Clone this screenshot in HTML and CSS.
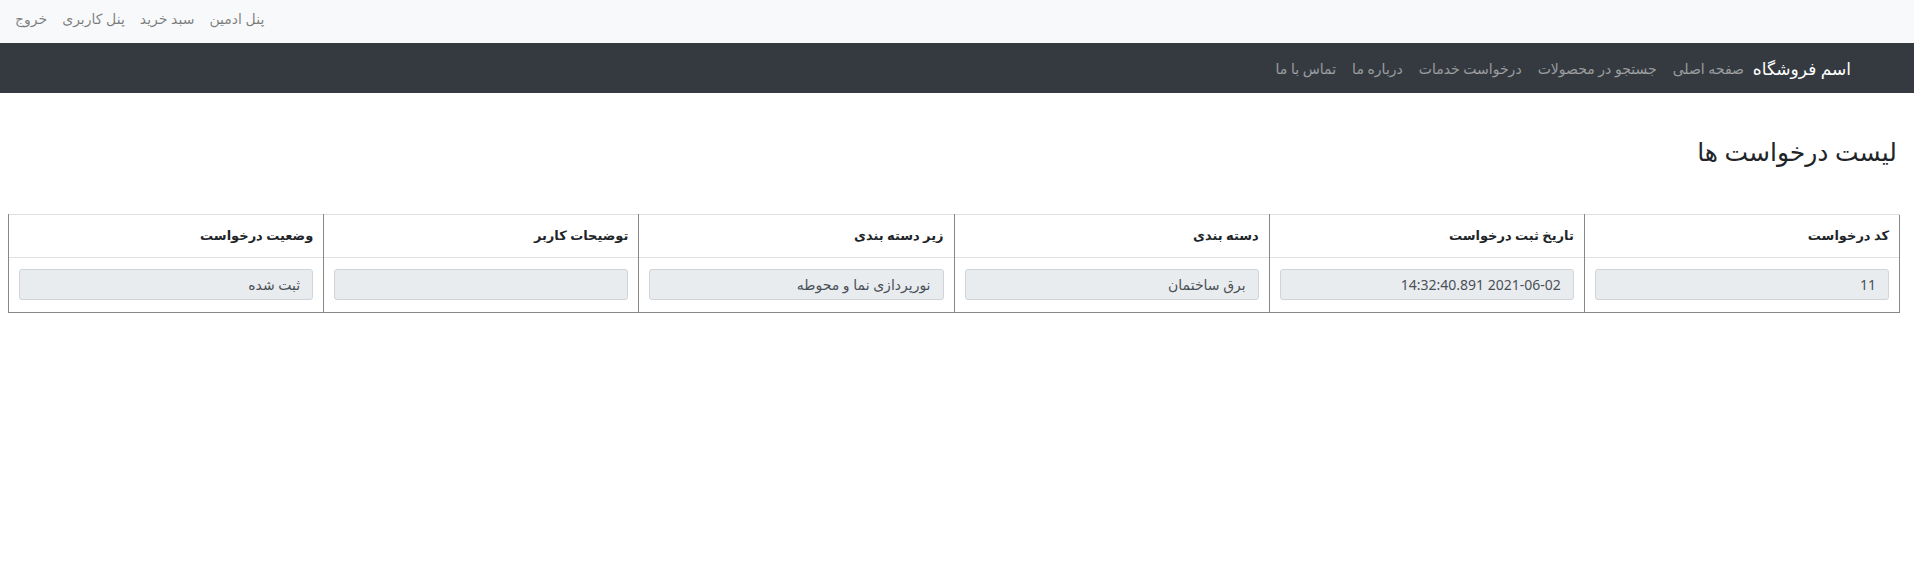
FILE: index.html
```html
<!DOCTYPE html>
<html lang="fa" dir="rtl">
<head>
<meta charset="utf-8">
<title>لیست درخواست ها</title>
<link rel="stylesheet" href="styles.css">
</head>
<body>
<div class="topbar">
  <a href="#" class="top-link">پنل ادمین</a>
  <a href="#" class="top-link">سبد خرید</a>
  <a href="#" class="top-link">پنل کاربری</a>
  <a href="#" class="top-link">خروج</a>
</div>
<nav class="navbar">
  <a href="#" class="brand">اسم فروشگاه</a>
  <a href="#" class="nav-link">صفحه اصلی</a>
  <a href="#" class="nav-link">جستجو در محصولات</a>
  <a href="#" class="nav-link">درخواست خدمات</a>
  <a href="#" class="nav-link">درباره ما</a>
  <a href="#" class="nav-link">تماس با ما</a>
</nav>
<main class="content">
  <h3 class="title">لیست درخواست ها</h3>
  <table class="req-table">
    <tr>
      <th>کد درخواست</th>
      <th>تاریخ ثبت درخواست</th>
      <th>دسته بندی</th>
      <th>زیر دسته بندی</th>
      <th>توضیحات کاربر</th>
      <th>وضعیت درخواست</th>
    </tr>
    <tr>
      <td><input class="field" readonly value="11"></td>
      <td><input class="field" readonly value="2021-06-02 14:32:40.891"></td>
      <td><input class="field" readonly value="برق ساختمان"></td>
      <td><input class="field" readonly value="نورپردازی نما و محوطه"></td>
      <td><input class="field" readonly value=""></td>
      <td><input class="field" readonly value="ثبت شده"></td>
    </tr>
  </table>
</main>
</body>
</html>
```

FILE: styles.css
```css
* { box-sizing: border-box; }
html, body {
  margin: 0;
  padding: 0;
  background: #fff;
  font-family: "Noto Sans", "DejaVu Sans", sans-serif;
  color: #212529;
}
a { text-decoration: none; }

.topbar {
  height: 43px;
  background: #f8f9fa;
  display: flex;
  justify-content: flex-end;
  align-items: center;
  gap: 15px;
  padding: 0 15px 6px 15px;
}
.top-link {
  color: rgba(0, 0, 0, 0.5);
  font-size: 14px;
}

.navbar {
  height: 50px;
  background: #343a40;
  display: flex;
  align-items: center;
  padding: 0 63px 0 0;
  gap: 16px;
}
.brand {
  color: #fff;
  font-size: 17px;
  margin-left: -7px;
}
.nav-link {
  color: rgba(255, 255, 255, 0.5);
  font-size: 14px;
}

.content {
  padding: 0 14px 0 8px;
}
.title {
  margin: 41px 3px 46px 0;
  font-size: 25px;
  font-weight: 500;
  line-height: 34px;
}

.req-table {
  width: 100%;
  table-layout: fixed;
  border-collapse: collapse;
  border: 1px solid #888;
  border-top-color: #dee2e6;
}
.req-table th,
.req-table td {
  border-left: 1px solid #888;
  border-right: 1px solid #888;
  border-top: 1px solid #dee2e6;
  text-align: right;
}
.req-table th {
  font-size: 13px;
  font-weight: bold;
  padding: 10px 10px 11px;
  line-height: 21px;
  color: #212529;
}
.req-table td {
  padding: 11px 10px 12px;
}
.field {
  display: block;
  width: 100%;
  height: 31px;
  padding: 0 12px;
  font-family: inherit;
  font-size: 14px;
  color: #495057;
  background: #e9ecef;
  border: 1px solid #ced4da;
  border-radius: 3px;
  outline: none;
}
```
